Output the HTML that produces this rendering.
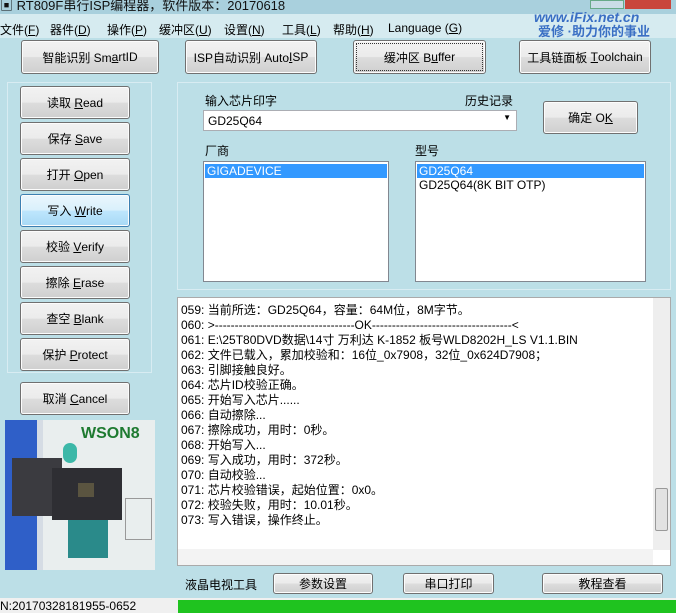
<!DOCTYPE html>
<html><head><meta charset="utf-8"><style>
*{margin:0;padding:0;box-sizing:border-box}
body{width:676px;height:613px;overflow:hidden;background:#bcdfe7;font-family:"Liberation Sans","Noto Sans CJK SC",sans-serif;font-size:12px;color:#000;position:relative}
.a{position:absolute}
.btn{position:absolute;border:1px solid #707070;border-radius:3px;background:linear-gradient(#f2f2f2 0%,#ebebeb 50%,#dddddd 51%,#cfcfcf 100%);display:flex;align-items:center;justify-content:center;font-size:12px;box-shadow:inset 0 0 0 1px #fcfcfc;white-space:pre}
.sel{background:#3399ff;color:#fff}
.lb{position:absolute;background:#fff;border:1px solid #828790}
u{text-decoration:underline}
.m{position:absolute;top:21px;font-size:12px}
</style></head><body>
<div class="a" style="left:0;top:0;width:676px;height:14px;background:#a9d0dd"></div>
<div class="a" style="left:0;top:-5px;font-size:13px;color:#111">▣ RT809F串行ISP编程器，软件版本：20170618</div>
<div class="a" style="left:590px;top:0;width:34px;height:9px;background:#c9dde6;border:1px solid #6a8"></div>
<div class="a" style="left:625px;top:0;width:46px;height:9px;background:#c9463c"></div>
<div class="a" style="left:0;top:14px;width:676px;height:24px;background:#d6ebf0"></div>
<div class="m" style="left:0">文件(<u>F</u>)</div>
<div class="m" style="left:50px">器件(<u>D</u>)</div>
<div class="m" style="left:107px">操作(<u>P</u>)</div>
<div class="m" style="left:159px">缓冲区(<u>U</u>)</div>
<div class="m" style="left:224px">设置(<u>N</u>)</div>
<div class="m" style="left:282px">工具(<u>L</u>)</div>
<div class="m" style="left:333px">帮助(<u>H</u>)</div>
<div class="m" style="left:388px">Language (<u>G</u>)</div>
<div class="a" style="left:534px;top:9px;font-size:14px;font-weight:bold;font-style:italic;color:#3a6fc4">www.iFix.net.cn</div>
<div class="a" style="left:538px;top:25px;font-size:13px;line-height:14px;font-weight:bold;color:#3a6fc4">爱修 ·助力你的事业</div>

<div class="btn" style="left:21px;top:40px;width:138px;height:34px">智能识别 Sm<u>a</u>rtID</div>
<div class="btn" style="left:185px;top:40px;width:132px;height:34px">ISP自动识别 Auto<u>I</u>SP</div>
<div class="btn" style="left:353px;top:40px;width:133px;height:34px;outline:1px dotted #333;outline-offset:-4px">缓冲区 B<u>u</u>ffer</div>
<div class="btn" style="left:519px;top:40px;width:132px;height:34px">工具链面板 <u>T</u>oolchain</div>

<div class="a" style="left:7px;top:82px;width:145px;height:291px;border:1px solid #d8ecf2"></div>
<div class="btn" style="left:20px;top:86px;width:110px;height:33px">读取 <u>R</u>ead</div>
<div class="btn" style="left:20px;top:122px;width:110px;height:33px">保存 <u>S</u>ave</div>
<div class="btn" style="left:20px;top:158px;width:110px;height:33px">打开 <u>O</u>pen</div>
<div class="btn" style="left:20px;top:194px;width:110px;height:33px;border-color:#3c7fb1;background:linear-gradient(#eaf6fd,#d9f0fc 50%,#bee6fd 51%,#a7d9f5)">写入 <u>W</u>rite</div>
<div class="btn" style="left:20px;top:230px;width:110px;height:33px">校验 <u>V</u>erify</div>
<div class="btn" style="left:20px;top:266px;width:110px;height:33px">擦除 <u>E</u>rase</div>
<div class="btn" style="left:20px;top:302px;width:110px;height:33px">查空 <u>B</u>lank</div>
<div class="btn" style="left:20px;top:338px;width:110px;height:33px">保护 <u>P</u>rotect</div>
<div class="btn" style="left:20px;top:382px;width:110px;height:33px">取消 <u>C</u>ancel</div>

<div class="a" style="left:5px;top:420px;width:150px;height:150px;background:#e9eeee"></div>
<div class="a" style="left:5px;top:420px;width:33px;height:150px;background:#2f5fc8"></div>
<div class="a" style="left:37px;top:420px;width:6px;height:150px;background:#d5dce4"></div>
<div class="a" style="left:81px;top:425px;font-size:16px;font-weight:bold;color:#1e7a30">WSON8</div>
<div class="a" style="left:63px;top:443px;width:14px;height:20px;background:#3cb8a8;border-radius:7px"></div>
<div class="a" style="left:12px;top:458px;width:50px;height:58px;background:#3b3b40"></div>
<div class="a" style="left:52px;top:468px;width:70px;height:52px;background:#2e2e33"></div>
<div class="a" style="left:78px;top:483px;width:16px;height:14px;background:#5a5440"></div>
<div class="a" style="left:68px;top:520px;width:40px;height:38px;background:#2a8a8a"></div>
<div class="a" style="left:125px;top:498px;width:27px;height:42px;border:1px solid #999"></div>

<div class="a" style="left:177px;top:82px;width:494px;height:208px;border:1px solid #d8ecf2"></div>
<div class="a" style="left:205px;top:92px">输入芯片印字</div>
<div class="a" style="left:465px;top:92px">历史记录</div>
<div class="lb" style="left:203px;top:110px;width:314px;height:21px;border-color:#abadb3;padding:3px 4px">GD25Q64<span style="position:absolute;right:5px;top:2px;font-size:8px">▼</span></div>
<div class="btn" style="left:543px;top:101px;width:95px;height:33px">确定 O<u>K</u></div>
<div class="a" style="left:205px;top:142px">厂商</div>
<div class="a" style="left:415px;top:142px">型号</div>
<div class="lb" style="left:203px;top:161px;width:186px;height:121px;padding:2px 1px"><div class="sel" style="height:14px;line-height:14px;padding-left:2px">GIGADEVICE</div></div>
<div class="lb" style="left:415px;top:161px;width:231px;height:121px;padding:2px 1px"><div class="sel" style="height:14px;line-height:14px;padding-left:2px">GD25Q64</div><div style="padding-left:2px;line-height:15px">GD25Q64(8K BIT OTP)</div></div>

<div class="lb" style="left:177px;top:297px;width:494px;height:269px;border-color:#aaa"></div>
<div class="a" style="left:653px;top:298px;width:17px;height:252px;background:#eee"></div>
<div class="a" style="left:655px;top:488px;width:13px;height:43px;background:#e2e2e2;border:1px solid #999;border-radius:2px"></div>
<div class="a" style="left:178px;top:549px;width:475px;height:16px;background:#f3f3f3"></div>
<div class="a" style="left:181px;top:303px;line-height:15px;font-size:12px;white-space:pre">059: 当前所选：GD25Q64，容量：64M位，8M字节。
060: &gt;-----------------------------------OK-----------------------------------&lt;
061: E:\25T80DVD数据\14寸 万利达 K-1852 板号WLD8202H_LS V1.1.BIN
062: 文件已载入，累加校验和：16位_0x7908，32位_0x624D7908；
063: 引脚接触良好。
064: 芯片ID校验正确。
065: 开始写入芯片......
066: 自动擦除...
067: 擦除成功，用时：0秒。
068: 开始写入...
069: 写入成功，用时：372秒。
070: 自动校验...
071: 芯片校验错误，起始位置：0x0。
072: 校验失败，用时：10.01秒。
073: 写入错误，操作终止。</div>

<div class="a" style="left:185px;top:576px">液晶电视工具</div>
<div class="btn" style="left:273px;top:573px;width:100px;height:21px">参数设置</div>
<div class="btn" style="left:403px;top:573px;width:91px;height:21px">串口打印</div>
<div class="btn" style="left:542px;top:573px;width:121px;height:21px">教程查看</div>

<div class="a" style="left:0;top:598px;width:676px;height:15px;background:#f0f0f0"></div>
<div class="a" style="left:0;top:599px;font-size:12px">N:20170328181955-0652</div>
<div class="a" style="left:178px;top:600px;width:498px;height:13px;background:#1fc31f"></div>
</body></html>
